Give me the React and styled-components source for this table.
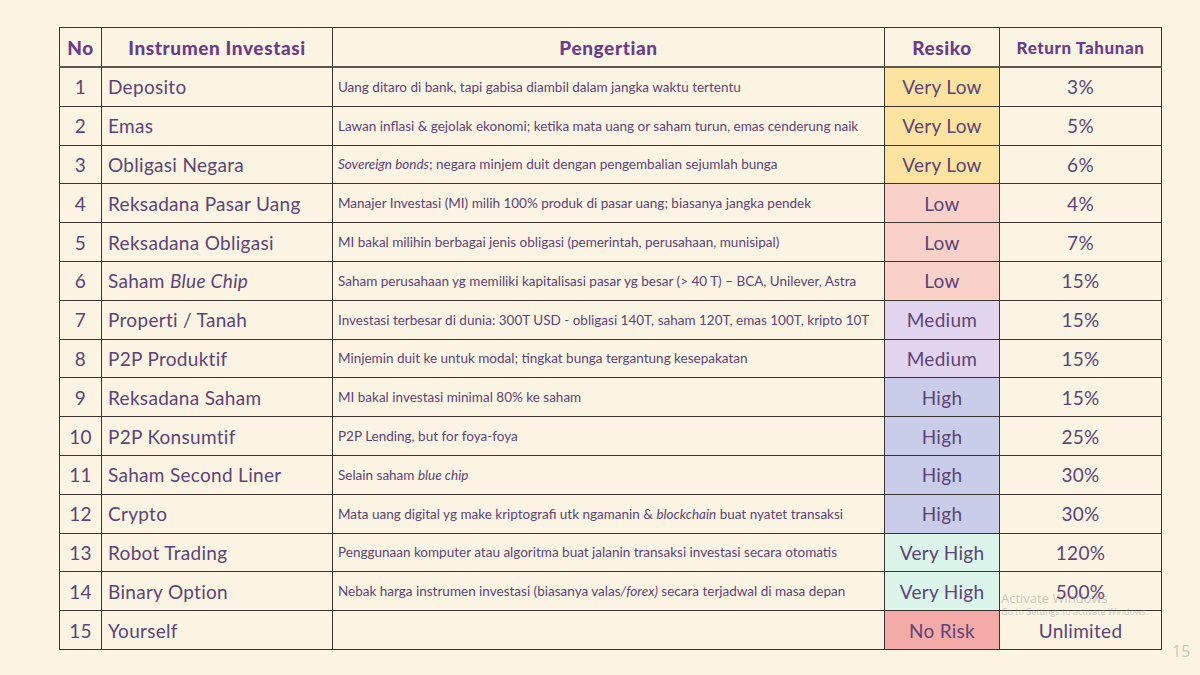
import React from "react";
import styled, { createGlobalStyle } from "styled-components";

const GlobalStyle = createGlobalStyle`
  html, body {
    margin: 0;
    padding: 0;
    background: #fbf4e2;
  }
  body {
    font-family: "Lato", "Open Sans", sans-serif;
  }
`;

const Slide = styled.div`
  position: relative;
  width: 1200px;
  height: 675px;
  box-sizing: border-box;
  padding: 27px 40px 0 59px;
  background: #fbf4e2;
  overflow: hidden;
`;

const Table = styled.table`
  border-collapse: collapse;
  table-layout: fixed;
  width: 1102px;
  border: 1.5px solid #77705f;
  color: #5d4378;
`;

const HeadCell = styled.th`
  height: 38px;
  padding: 0;
  border: 1px solid #3a3530;
  border-bottom: 2px solid #5e584c;
  font-weight: 900;
  font-size: ${(p) => p.size || 19}px;
  letter-spacing: 0.6px;
  color: #6b3c8c;
  text-align: center;
  white-space: nowrap;
`;

const Cell = styled.td`
  height: 37.8px;
  padding: 0 ${(p) => (p.pad ? 6 : 0)}px;
  border: 1px solid #3a3530;
  font-size: 19px;
  letter-spacing: 0.3px;
  text-align: ${(p) => p.align || "center"};
  white-space: nowrap;
  overflow: hidden;
  background: ${(p) => p.bg || "transparent"};
`;

const DescCell = styled(Cell)`
  font-size: 13.5px;
  letter-spacing: 0;
  padding: 0 5px;
`;

const Watermark = styled.div`
  position: absolute;
  left: ${(p) => p.x}px;
  top: ${(p) => p.y}px;
  font-family: "Open Sans", sans-serif;
  font-size: ${(p) => p.size}px;
  color: rgba(120, 120, 120, 0.4);
  pointer-events: none;
`;

const riskColors = {
  "Very Low": "#fde3a0",
  Low: "#f9d1c9",
  Medium: "#e1d4ee",
  High: "#c9cde9",
  "Very High": "#dbf5ea",
  "No Risk": "#f4aba8",
};

const rows = [
  ["Deposito", "Uang ditaro di bank, tapi gabisa diambil dalam jangka waktu tertentu", "Very Low", "3%"],
  ["Emas", "Lawan inflasi & gejolak ekonomi; ketika mata uang or saham turun, emas cenderung naik", "Very Low", "5%"],
  ["Obligasi Negara", <><i>Sovereign bonds</i>; negara minjem duit dengan pengembalian sejumlah bunga</>, "Very Low", "6%"],
  ["Reksadana Pasar Uang", "Manajer Investasi (MI) milih 100% produk di pasar uang; biasanya jangka pendek", "Low", "4%"],
  ["Reksadana Obligasi", "MI bakal milihin berbagai jenis obligasi (pemerintah, perusahaan, munisipal)", "Low", "7%"],
  [<>Saham <i>Blue Chip</i></>, "Saham perusahaan yg memiliki kapitalisasi pasar yg besar (> 40 T) – BCA, Unilever, Astra", "Low", "15%"],
  ["Properti / Tanah", "Investasi terbesar di dunia: 300T USD - obligasi 140T, saham 120T, emas 100T, kripto 10T", "Medium", "15%"],
  ["P2P Produktif", "Minjemin duit ke untuk modal; tingkat bunga tergantung kesepakatan", "Medium", "15%"],
  ["Reksadana Saham", "MI bakal investasi minimal 80% ke saham", "High", "15%"],
  ["P2P Konsumtif", "P2P Lending, but for foya-foya", "High", "25%"],
  ["Saham Second Liner", <>Selain saham <i>blue chip</i></>, "High", "30%"],
  ["Crypto", <>Mata uang digital yg make kriptografi utk ngamanin & <i>blockchain</i> buat nyatet transaksi</>, "High", "30%"],
  ["Robot Trading", "Penggunaan komputer atau algoritma buat jalanin transaksi investasi secara otomatis", "Very High", "120%"],
  ["Binary Option", <>Nebak harga instrumen investasi (biasanya valas<i>/forex)</i> secara terjadwal di masa depan</>, "Very High", "500%"],
  ["Yourself", "", "No Risk", "Unlimited"],
];

const App = () => (
  <>
    <GlobalStyle />
    <Slide>
      <Table>
        <colgroup>
          <col style={{ width: 42 }} />
          <col style={{ width: 231 }} />
          <col style={{ width: 552 }} />
          <col style={{ width: 115 }} />
          <col style={{ width: 162 }} />
        </colgroup>
        <thead>
          <tr>
            <HeadCell>No</HeadCell>
            <HeadCell>Instrumen Investasi</HeadCell>
            <HeadCell>Pengertian</HeadCell>
            <HeadCell>Resiko</HeadCell>
            <HeadCell size={17}>Return Tahunan</HeadCell>
          </tr>
        </thead>
        <tbody>
          {rows.map(([name, desc, risk, ret], i) => (
            <tr key={i}>
              <Cell>{i + 1}</Cell>
              <Cell align="left" pad>{name}</Cell>
              <DescCell align="left">{desc}</DescCell>
              <Cell bg={riskColors[risk]}>{risk}</Cell>
              <Cell>{ret}</Cell>
            </tr>
          ))}
        </tbody>
      </Table>
      <Watermark x={1001} y={589} size={13}>Activate Windows</Watermark>
      <Watermark x={1001} y={605} size={9}>Go to Settings to activate Windows.</Watermark>
      <Watermark x={1172} y={640} size={16}>15</Watermark>
    </Slide>
  </>
);

export default App;
